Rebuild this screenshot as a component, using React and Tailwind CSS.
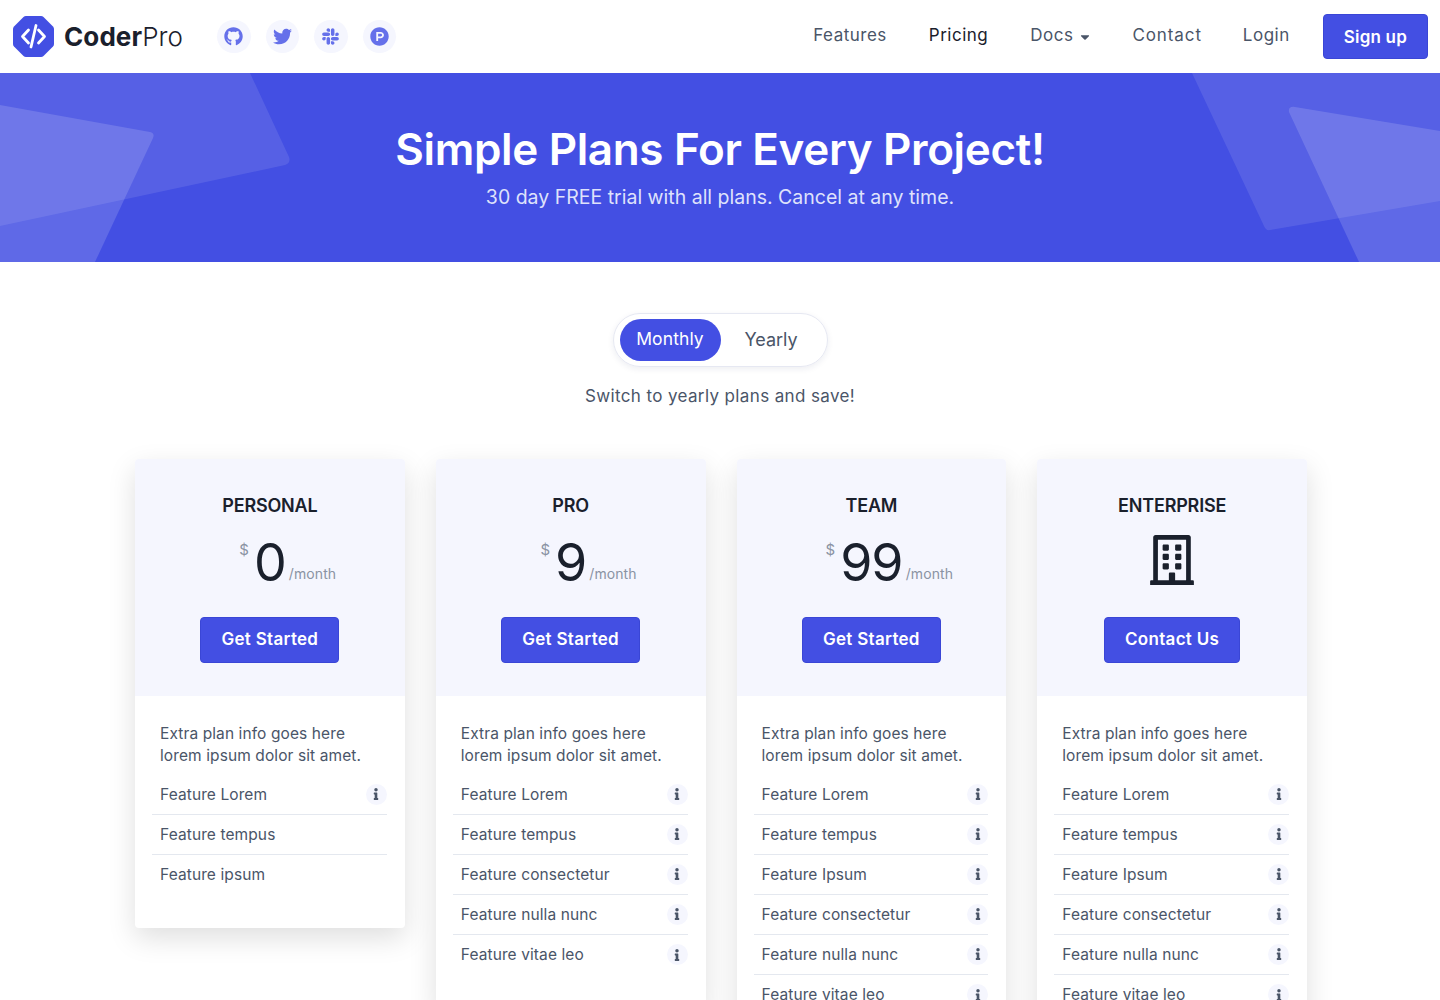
import { FaGithub, FaTwitter, FaSlack, FaProductHunt, FaRegBuilding, FaInfo, FaCaretDown } from 'react-icons/fa'

const socials = [FaGithub, FaTwitter, FaSlack, FaProductHunt]

const plans = [
  { name: 'PERSONAL', price: '0', cta: 'Get Started', features: [['Feature Lorem', true], ['Feature tempus', false], ['Feature ipsum', false]] },
  { name: 'PRO', price: '9', cta: 'Get Started', features: [['Feature Lorem', true], ['Feature tempus', true], ['Feature consectetur', true], ['Feature nulla nunc', true], ['Feature vitae leo', true]] },
  { name: 'TEAM', price: '99', cta: 'Get Started', features: [['Feature Lorem', true], ['Feature tempus', true], ['Feature Ipsum', true], ['Feature consectetur', true], ['Feature nulla nunc', true], ['Feature vitae leo', true]] },
  { name: 'ENTERPRISE', cta: 'Contact Us', features: [['Feature Lorem', true], ['Feature tempus', true], ['Feature Ipsum', true], ['Feature consectetur', true], ['Feature nulla nunc', true], ['Feature vitae leo', true]] },
]

function Logo() {
  return (
    <svg width="43" height="43" viewBox="0 0 43 43" className="shrink-0">
      <path d="M14 1 L29 1 Q30.5 1 31.5 2 L41 11.5 Q42 12.5 42 14 L42 29 Q42 30.5 41 31.5 L31.5 41 Q30.5 42 29 42 L14 42 Q12.5 42 11.5 41 L2 31.5 Q1 30.5 1 29 L1 14 Q1 12.5 2 11.5 L11.5 2 Q12.5 1 14 1 Z" fill="#434fe3" />
      <path d="M16.5 15 L10.5 21.5 L16.5 28 M26.5 15 L32.5 21.5 L26.5 28 M24 10.5 L19 32" fill="none" stroke="#fff" strokeWidth="2.8" strokeLinecap="round" strokeLinejoin="round" />
    </svg>
  )
}

function HeroShapes() {
  return (
    <svg className="absolute inset-0 w-full h-full" viewBox="0 0 1440 189" preserveAspectRatio="none">
      <path d="M0 0 L250 0 L289 84 Q291 90 285 92 L0 153 Z" fill="#fff" fillOpacity="0.1" />
      <path d="M0 32 L150 59 Q155 60 153 65 L95 189 L0 189 Z" fill="#fff" fillOpacity="0.15" />
      <path d="M1192 0 L1440 0 L1440 128 L1270 157 Q1266 158 1264 153 Z" fill="#fff" fillOpacity="0.1" />
      <path d="M1295 34 L1440 58 L1440 189 L1359 189 L1289 39 Q1288 33 1295 34 Z" fill="#fff" fillOpacity="0.15" />
    </svg>
  )
}

function PlanCard({ plan }) {
  return (
    <div className="rounded bg-white shadow-[0_10px_28px_rgba(0,0,0,0.13)] overflow-hidden">
      <div className="h-[237px] bg-[#f5f6fe] flex flex-col items-center pt-[34px]">
        <h3 className="text-[18px] leading-[26px] font-semibold tracking-[-0.2px] text-[#1a202c]">{plan.name}</h3>
        <div className="h-[60px] w-full mt-[14px] flex items-center justify-center">
          {plan.price ? (
            <div className="w-full grid grid-cols-[1fr_auto_1fr] text-[#1a202c]">
              <span className="justify-self-end text-[15px] leading-[18px] mt-[5px] mr-[5px] text-[#8a93a3]">$</span>
              <span className="text-[52px] leading-[54px] font-normal tracking-[-1px]">{plan.price}</span>
              <span className="text-[14px] leading-[18px] mt-[29px] ml-[3px] tracking-[0.1px] text-[#8a93a3]">/month</span>
            </div>
          ) : (
            <FaRegBuilding className="text-[#1a202c] mb-[7px]" size={50} />
          )}
        </div>
        <button className="mt-[24px] h-[46px] px-[20px] rounded bg-[#434fe3] border border-[#3a46d6] text-white text-[17px] font-semibold tracking-[0.3px]">
          {plan.cta}
        </button>
      </div>
      <div className="pt-[27px] pb-[33px] pl-[17px] pr-[18px]">
        <p className="px-[8px] text-[15.5px] leading-[22px] text-[#4a5568] mb-[8px] tracking-[0.1px]">
          Extra plan info goes here<br />lorem ipsum dolor sit amet.
        </p>
        <ul>
          {plan.features.map(([label, info], i) => (
            <li key={label} className={`h-[40px] pl-[8px] flex items-center justify-between text-[15.5px] text-[#4a5568] tracking-[0.1px] ${i < plan.features.length - 1 ? 'border-b border-[#e4e8ef]' : ''}`}>
              {label}
              {info && (
                <span className="w-[21px] h-[21px] mb-[1px] rounded-full bg-[#f5f6fe] flex items-center justify-center">
                  <FaInfo className="text-[#4a5568]" size={12} />
                </span>
              )}
            </li>
          ))}
        </ul>
      </div>
    </div>
  )
}

export default function App() {
  return (
    <div className="h-screen overflow-hidden bg-white font-['Inter','Liberation_Sans',sans-serif] text-[#4a5568]">
      <header className="h-[73px] flex items-center justify-between pl-[12px] pr-[12px]">
        <div className="flex items-center">
          <Logo />
          <a className="ml-[9px] text-[26px] font-bold tracking-[0.1px] text-[#1a202c]">
            Coder<span className="font-light">Pro</span>
          </a>
          <div className="ml-[34px] flex gap-[15px]">
            {socials.map((Icon, i) => (
              <span key={i} className="w-[33.5px] h-[33.5px] rounded-full bg-[#f5f6fe] flex items-center justify-center">
                <Icon className="text-[#6570ea]" size={19} />
              </span>
            ))}
          </div>
        </div>
        <nav className="flex items-center text-[17px] tracking-[0.5px]">
          <a className="mr-[42px] mb-[2px]">Features</a>
          <a className="mr-[42px] mb-[2px] text-[#1a202c]">Pricing</a>
          <a className="mr-[40px] mb-[2px] flex items-center">Docs<FaCaretDown className="ml-[5px] mt-[2px]" size={14} /></a>
          <a className="mr-[41px] mb-[2px] tracking-[0.9px]">Contact</a>
          <a className="mr-[33px] mb-[2px]">Login</a>
          <button className="h-[45px] pt-[2px] px-[20px] rounded bg-[#434fe3] border border-[#3a46d6] text-white text-[17px] font-semibold tracking-[0.2px]">Sign up</button>
        </nav>
      </header>

      <section className="relative h-[189px] bg-[#434fe3] overflow-hidden text-center">
        <HeroShapes />
        <div className="relative pt-[46px]">
          <h1 className="text-[44px] leading-[60px] font-semibold tracking-[-0.35px] text-white">Simple Plans For Every Project!</h1>
          <p className="mt-[3px] text-[19.5px] leading-[30px] text-[#dfe2fb]">30 day FREE trial with all plans. Cancel at any time.</p>
        </div>
      </section>

      <section className="flex flex-col items-center pt-[51px]">
        <div className="w-[215px] h-[54px] rounded-full border border-[#e6e8f2] shadow-[0_2px_6px_rgba(30,40,90,0.08)] flex items-center pl-[6px]">
          <span className="w-[101px] h-[42px] pb-[2px] rounded-full bg-[#434fe3] text-white text-[17.5px] tracking-[0.1px] flex items-center justify-center">Monthly</span>
          <span className="w-[101px] pb-[2px] text-[18px] text-center text-[#4a5568]">Yearly</span>
        </div>
        <p className="mt-[16px] text-[17px] leading-[26px] tracking-[0.37px]">Switch to yearly plans and save!</p>
      </section>

      <section className="mt-[50px] ml-[135px] w-[1172px] grid grid-cols-4 gap-x-[31px] items-start">
        {plans.map((plan) => (
          <PlanCard key={plan.name} plan={plan} />
        ))}
      </section>
    </div>
  )
}
